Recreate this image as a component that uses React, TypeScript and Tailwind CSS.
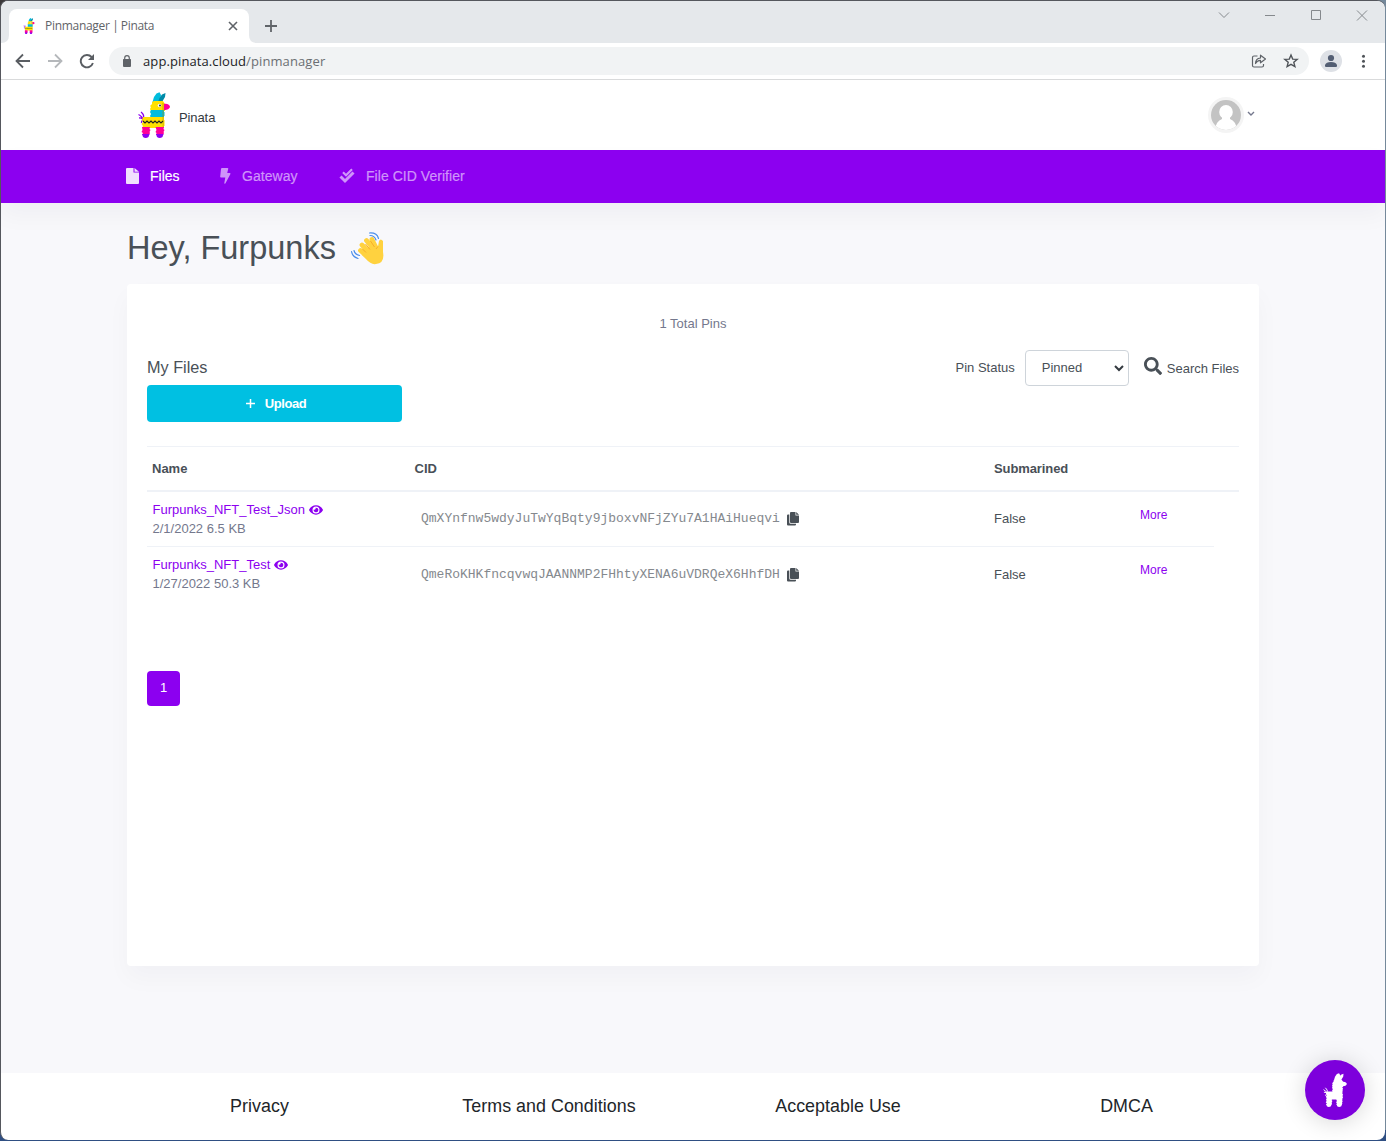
import React from "react";
import { FaSearch, FaEye } from "react-icons/fa";

function Llama({ className, white }: { className: string; white?: boolean }) {
  const c = (color: string) => (white ? "#fff" : color);
  return (
    <svg viewBox="0 0 32 46" className={className}>
      <path d="M5 29Q5 25.500 1 26M5 28Q4.500 24.500 0.500 22.500M5 27Q7 23 3 20M5 28Q3 29 3.500 31" fill="none" stroke={c("#8c00f0")} strokeWidth="1.300" />
      <path d="M14.500 10 16 5 18.500 1.500 21.500 0.300 23 3 22 10Z" fill={c("#00bcdc")} />
      <path d="M20 10 21.500 6 24 2.500 27.500 1 27 5 24 10Z" fill={c("#008aa8")} />
      <path d="M14 10 16 9H25L27 12V19H13L12 17 13 15 12 14 14 12Z" fill={c("#ffe000")} />
      <path d="M26 12C29 11 32 13 32 15C31 17 30 18 26 18Z" fill={c("#ff0098")} />
      {!white && <circle cx="21.5" cy="13.5" r="1.800" fill="#f8f8f8" />}
      {!white && <circle cx="22" cy="13.5" r=".9" fill="#222" />}
      <path d="M13 18H26V20L27 21 26 22 27 23 26 24V26H13L12 24 13 22 12 20Z" fill={c("#00bcdc")} />
      <path d="M5 25H26V28L27 29 26 30 27 31 26 32 27 33 26 34V36H4L5 34 3.500 32 5 30 4 28Z" fill={c("#ffe000")} />
      {!white && <path d="M24 11 26 11V36H24.500Z" fill="#b09000" opacity=".35" />}
      {!white && <path d="m5 29 2 2 2-2 2 2 2-2 2 2 2-2 2 2 2-2 2 2 2-2" fill="none" stroke="#222" strokeWidth="1.1" />}
      <path d="M4 35H12L11.500 37 12.500 38 11.500 40 12 41 11 43H4L5 41 3.500 40 4.500 38Z" fill={c("#ff0098")} />
      <path d="M17.500 35H26L25.500 37 26.500 38 25.500 40 26 41 25 43H18L18.500 41 17.500 40 18.500 38Z" fill={c("#ff0098")} />
      <path d="M4 42H11.500L10.500 45Q7.500 47 5 45Z" fill={c("#8c00f0")} />
      <path d="M18 42H25.500L24.500 45Q21.500 47 19 45Z" fill={c("#8c00f0")} />
    </svg>
  );
}

function Wave() {
  return (
    <svg viewBox="0 0 36 34" className="ml-[14px] mt-[2px] h-[34px] w-[36px]">
      <g stroke="#ffd23f" strokeWidth="4.800" strokeLinecap="round">
        <path d="m10.500 18.500 9 8M12 13l10 10M16.500 8.500l9 11M22 7.500l6 12" />
      </g>
      <path d="M14 18 24 12 28 14.500 29 9Q30.500 6 33 9L33 20Q35 31 26 32Q21 33 16 27L12 23Z" fill="#ffd23f" />
      <path d="m12.500 17 3.500 3.500M15.500 12l4.500 5.500M20.500 9l4 6M28 14.500l-2 2.500" fill="none" stroke="#f7ae2a" strokeWidth="1" />
      <g fill="none" stroke="#4b8eea" strokeWidth="1.200" strokeLinecap="round">
        <path d="M20 3.500Q24.500 3.500 26 8M19.500 1Q27 0.500 28.500 6.500M4 18.500Q5 22.500 9.500 23.500M1.500 19.500Q2.500 25 8 26.500" />
      </g>
    </svg>
  );
}

function CopyIcon() {
  return (
    <svg viewBox="0 0 12 14" className="ml-[7.5px] h-[14px] w-3 fill-[#495057]">
      <path d="M4 0H8.500V3.500H12V10Q12 11 11 11H4Q3 11 3 10V1Q3 0 4 0ZM9.200 0 12 2.800H9.200ZM1 2.500H2.300V10.500Q2.300 11.700 3.500 11.700H9V12.500Q9 13.500 8 13.500H1Q0 13.500 0 12.500V3.500Q0 2.500 1 2.500Z" />
    </svg>
  );
}

const files = [
  { name: "Furpunks_NFT_Test_Json", info: "2/1/2022 6.5 KB", cid: "QmXYnfnw5wdyJuTwYqBqty9jboxvNFjZYu7A1HAiHueqvi" },
  { name: "Furpunks_NFT_Test", info: "1/27/2022 50.3 KB", cid: "QmeRoKHKfncqvwqJAANNMP2FHhtyXENA6uVDRQeX6HhfDH" },
];

function BrowserChrome() {
  return (
    <div className="font-['Open_Sans',sans-serif]">
      <div className="flex h-[43px] items-start rounded-t-lg bg-[#e5e8eb]">
        <svg viewBox="0 0 8 8" className="mt-[35px] h-2 w-2 fill-white"><path d="M8 0V8H0Q8 8 8 0Z" /></svg>
        <div className="mt-[9px] flex h-[34px] w-[240px] items-center rounded-t-lg bg-white pl-[14px] pr-[10px]">
          <Llama className="h-4 w-3" />
          <span className="ml-[10px] whitespace-nowrap text-[12px] tracking-[-0.55px] text-[#5f6368]"><span className="tracking-[-0.3px]">Pinmanager</span> | <span className="tracking-[-0.3px]">Pinata</span></span>
          <svg viewBox="0 0 12 12" className="ml-auto h-3 w-3 stroke-[#5f6368]" strokeWidth="1.600"><path d="m2 2 8 8M10 2l-8 8" /></svg>
        </div>
        <svg viewBox="0 0 8 8" className="mt-[35px] h-2 w-2 fill-white"><path d="M0 0V8H8Q0 8 0 0Z" /></svg>
        <svg viewBox="0 0 14 14" className="ml-[7px] mt-[19px] h-[14px] w-[14px] stroke-[#606469]" strokeWidth="1.800"><path d="M7 1v12M1 7h12" /></svg>
        <svg viewBox="0 0 160 20" className="ml-auto mr-[12px] mt-[5px] h-5 w-[160px]" fill="none" stroke="#85898d">
          <path d="m6 7.500 5 5 5-5M52 10.500h10M98.500 5.500h9v9h-9zM144 5.500l10 10M154 5.500l-10 10" />
        </svg>
      </div>
      <div className="flex h-[37px] items-center border-b border-[#d9dadb] bg-white pl-[14px]">
        <svg viewBox="0 0 16 16" className="h-4 w-4" fill="none" stroke="#5a5e63" strokeWidth="1.800"><path d="M15 8H2M8 1.500 1.500 8 8 14.500" /></svg>
        <svg viewBox="0 0 16 16" className="ml-4 h-4 w-4" fill="none" stroke="#b5b8bb" strokeWidth="1.800"><path d="M1 8h13M8 1.500 14.500 8 8 14.500" /></svg>
        <svg viewBox="0 0 16 16" className="ml-4 h-4 w-4" fill="none" stroke="#5a5e63" strokeWidth="1.900"><path d="M13.900 10A6.200 6.200 0 1 1 12.600 4L14 6" /><path d="M15 1v6H9z" fill="#5a5e63" stroke="none" /></svg>
        <div className="ml-[14px] flex h-7 w-[1200px] items-center rounded-full bg-[#f1f3f4] pl-[13px] pr-[10px]">
          <svg viewBox="0 0 10 12" className="h-3 w-[10px]" fill="#5f6368"><path d="M1.500 4h7q.5 0 .5 1v6q0 1-1 1H2q-1 0-1-1V5q0-1 .5-1" /><path d="M2.700 5V3a2.300 2.300 0 0 1 4.600 0v2" fill="none" stroke="#5f6368" strokeWidth="1.200" /></svg>
          <span className="ml-[11px] mt-[1px] whitespace-nowrap text-[13px] tracking-[0.1px] text-[#202124]">app.pinata.cloud<span className="text-[#6b6f73]">/pinmanager</span></span>
          <svg viewBox="0 0 16 16" className="ml-auto h-4 w-4" fill="none" stroke="#5f6368" strokeWidth="1.200"><path d="M6.500 3H3Q1.500 3 1.500 4.500v8Q1.500 14 3 14h8q1.500 0 1.500-1.500V11M4.500 10.500Q4.500 5.500 9.500 5V2.200L14.500 6 9.500 9.800V7.300Q6 7.500 4.500 10.500Z" strokeLinejoin="round" /></svg>
          <svg viewBox="0 0 16 16" className="ml-4 h-4 w-4" fill="none" stroke="#505459" strokeWidth="1.400"><path d="m8 2 1.700 4.100 4.500.3-3.400 2.900 1.100 4.300L8 11.300l-3.900 2.300 1.100-4.300L1.800 6.400l4.500-.3z" /></svg>
        </div>
        <svg viewBox="0 0 22 22" className="ml-[11px] h-[22px] w-[22px]"><circle cx="11" cy="11" r="11" fill="#dee1e6" /><g fill="#535e73"><circle cx="11" cy="8" r="3.100" /><path d="M5 16v-1q1-3 6-3t6 3v1q0 1-1 1H6q-1 0-1-1" /></g></svg>
        <svg viewBox="0 0 4 14" className="ml-[19px] h-[14px] w-1 fill-[#505459]"><circle cx="2.500" cy="2.200" r="1.500" /><circle cx="2.500" cy="7.200" r="1.500" /><circle cx="2.500" cy="12.200" r="1.500" /></svg>
      </div>
    </div>
  );
}

export default function App() {
  return (
    <div className="flex h-[1141px] w-[1386px] flex-col overflow-hidden bg-[linear-gradient(180deg,transparent_0_1130px,#2f4f83_1130px),linear-gradient(90deg,#3b3839_0_940px,#75899b_940px)] font-['Liberation_Sans',Arial,sans-serif] text-[13px] text-[#495057]">
      <div className="mr-px flex h-[1140px] flex-col overflow-hidden rounded-lg border-l border-t border-[#55575d] bg-white">
        <div className="-mt-px"><BrowserChrome /></div>
        <header className="flex h-[70px] shrink-0 items-center pl-[137px] pr-[130px]">
          <Llama className="h-[46px] w-8" />
          <span className="ml-[9px] mt-[5px] tracking-[-0.1px] text-[#343a40]">Pinata</span>
          <div className="ml-auto flex h-9 w-9 items-center justify-center rounded-full bg-[#f4f4f4]">
            <svg viewBox="0 0 30 30" className="h-[30px] w-[30px] rounded-full"><rect width="30" height="30" fill="#c3c3c3" /><ellipse cx="15" cy="12" rx="6.800" ry="7" fill="#fff" /><path d="M11 17h8v2q6 2 7 11H4q1-9 7-11z" fill="#fff" /></svg>
          </div>
          <svg viewBox="0 0 8 6" className="ml-[3px] mt-[-2px] h-[6px] w-2" fill="none" stroke="#74788d" strokeWidth="1.400"><path d="m1 1 3 3 3-3" /></svg>
        </header>
        <nav className="relative z-10 flex h-[53px] shrink-0 items-center bg-[#8c00f0] pl-[125px] text-[14px] text-[#cf94fa] shadow-[0_12px_24px_rgba(18,38,63,0.04)]">
          <svg viewBox="0 0 13 16" className="mb-[2px] h-4 w-[13px] fill-[#f1defe]"><path d="M1 0H7.500V4.500H13V15Q13 16 12 16H1Q0 16 0 15V1Q0 0 1 0ZM8.500 0 13 3.700H8.500Z" /></svg>
          <span className="ml-[11px] w-[70px] text-white [-webkit-text-stroke:0.2px]">Files</span>
          <svg viewBox="0 0 11 16" className="mb-[2px] h-4 w-[11px] fill-current"><path d="M2 0H7.500Q8.500 0 8.200 1L7.200 5H9.800Q11 5 10.300 6.200L5.500 15.300Q4.300 16.500 4.300 15L5.300 9.500H1Q0 9.500 .2 8.500L1 1Q1.100 0 2 0Z" /></svg>
          <span className="ml-[11px] w-[97px] tracking-[0.04px] [-webkit-text-stroke:0.2px]">Gateway</span>
          <svg viewBox="0 0 16 16" className="mb-[2px] h-4 w-4" fill="none" stroke="currentColor"><path d="m4 4.200 3 3 6-6" strokeWidth="2.200" /><path d="M1.500 8.500 6 13l8.500-8.500" strokeWidth="3" /></svg>
          <span className="ml-[11px] tracking-[0.04px] [-webkit-text-stroke:0.2px]">File CID Verifier</span>
        </nav>
        <main className="h-[870px] shrink-0 bg-[#f8f8fb] px-[126px]">
          <div className="flex h-[81px] items-center pt-[8px] text-[32.5px]">
            <h1 className="mt-[2px] whitespace-nowrap">Hey, Furpunks</h1><Wave />
          </div>
          <section className="h-[682px] rounded bg-white px-5 pt-[30px] shadow-[0_12px_24px_rgba(18,38,63,0.03)]">
            <p className="h-9 text-center leading-[20px] text-[#74788d]">1 Total Pins</p>
            <div className="flex h-[71px] items-start">
              <div className="w-[255px] pt-[5px]">
                <h2 className="h-[30px] text-[16.25px] leading-[24px]">My Files</h2>
                <button className="flex h-[37px] w-full items-center justify-center rounded bg-[#00c0e2] pl-[3px] font-bold text-white">
                  <svg viewBox="0 0 9 9" className="mr-[10px] h-[9px] w-[9px] stroke-white" strokeWidth="1.500"><path d="M4.500 0v9M0 4.500h9" /></svg><span className="tracking-[-0.4px]">Upload</span>
                </button>
              </div>
              <div className="ml-auto flex h-9 items-center">
                <span>Pin Status</span>
                <button className="ml-[10px] flex h-9 w-[104px] items-center justify-between rounded border border-[#ced4da] pl-4 pr-1">Pinned
                  <svg viewBox="0 0 10 7" className="h-[7px] w-[10px]" fill="none" stroke="#343a40" strokeWidth="2"><path d="m1 1 4 4 4-4" /></svg>
                </button>
                <FaSearch className="ml-[15px] mr-[5px] mt-[-4px] h-[18px] w-[18px]" /><span className="mt-[2px]">Search Files</span>
              </div>
            </div>
            <div className="mt-[25px] flex h-[46px] items-center border-b-2 border-t border-[#eff2f7] pl-[5px] font-bold">
              <span className="w-[262.5px]">Name</span><span className="w-[579.5px]">CID</span><span className="tracking-[-0.1px]">Submarined</span>
            </div>
            {files.map((f, i) => (
              <div key={f.name} className={i === 0 ? "mr-[25px] flex h-[55px] border-b border-[#eff2f7] pl-[5px]" : "mr-[25px] flex h-[55px] pl-[5px]"}>
                <div className="w-[269px] pl-[0.5px] pt-[8px] leading-[19px]">
                  <div className="flex items-center text-[#8c00f0]">{f.name}<FaEye className="ml-1 h-[14px] w-[14px]" /></div>
                  <div className="text-[#74788d]">{f.info}</div>
                </div>
                <div className="flex w-[573px] items-center font-['Liberation_Mono',monospace] font-light text-[#85898e]">{f.cid}<CopyIcon /></div>
                <div className="flex w-[146px] items-center">False</div>
                <div className="pt-[14px] text-[12px] leading-[18px] text-[#8c00f0]">More</div>
              </div>
            ))}
            <button className="mt-[69px] h-[35px] w-[33px] rounded bg-[#8c00f0] pb-[2px] text-white">1</button>
          </section>
        </main>
        <footer className="grid h-[67px] shrink-0 grid-cols-[271px_308px_270px_307px] pl-[123px] pt-[22px] text-center text-[17.875px] leading-[22px] tracking-[0.03px] text-[#212529]">
          <span>Privacy</span><span>Terms and Conditions</span><span>Acceptable Use</span><span>DMCA</span>
        </footer>
      </div>
      <button className="fixed left-[1305px] top-[1060px] z-20 flex h-[60px] w-[60px] items-center justify-center rounded-full bg-[#7d00dc] shadow-[0_2px_24px_rgba(0,0,0,0.16)]"><Llama white className="h-[34px] w-6" /></button>
    </div>
  );
}
